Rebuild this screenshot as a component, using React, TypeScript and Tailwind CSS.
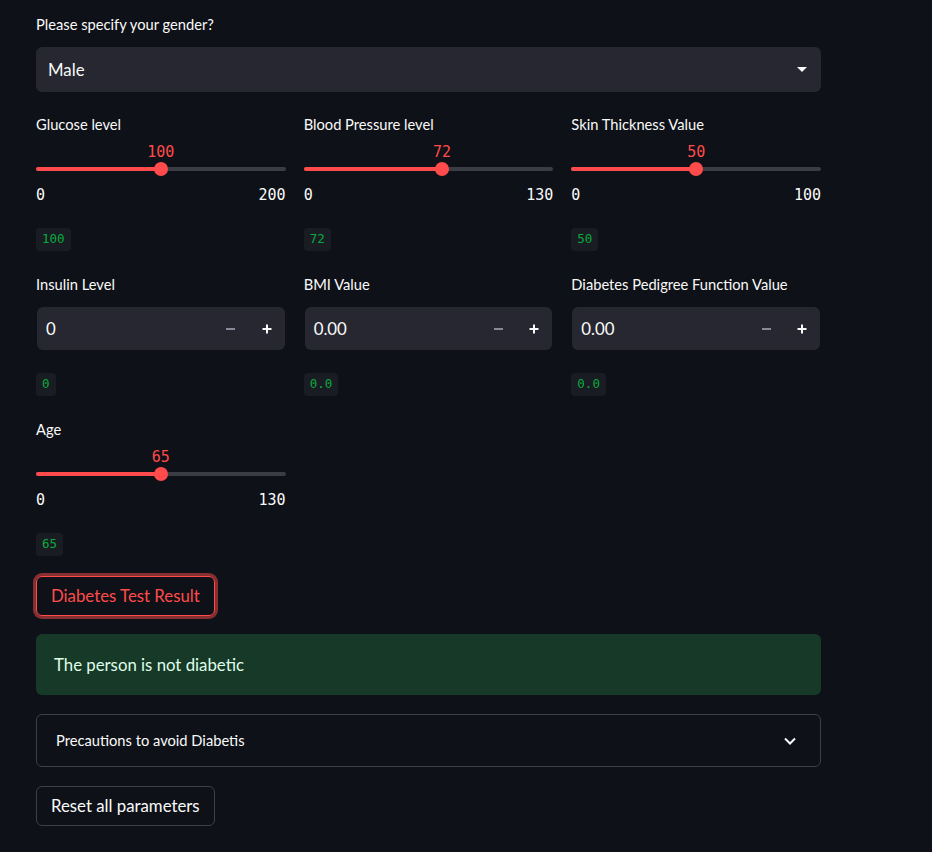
import React from "react";

const sans = "font-['Lato','Liberation_Sans',sans-serif]";
const mono = "font-['DejaVu_Sans_Mono','Liberation_Mono',monospace]";

function Badge({ value }: { value: string }) {
  return (
    <div className="flex">
      <span className={`${mono} h-[23px] px-[6px] flex items-center rounded-[4px] bg-[#1a1c23] text-[#09ab3b] text-[12.5px]`}>
        {value}
      </span>
    </div>
  );
}

function SliderField({ label, value, min, max }: { label: string; value: number; min: number; max: number }) {
  const pct = ((value - min) / (max - min)) * 100;
  return (
    <div className="flex flex-col">
      <div className="h-[20px] flex items-center text-[14.7px] text-[#fafafa]">{label}</div>
      <div className="relative h-[18px] mt-[9px]">
        <span
          className={`${mono} absolute top-0 -translate-x-1/2 text-[15px] leading-[18px] text-[#ff4b4b]`}
          style={{ left: `${pct}%` }}
        >
          {value}
        </span>
      </div>
      <div className="relative h-[14px] mt-[1px] flex items-center">
        <div className="w-full h-[4px] rounded-full bg-[#3b3d45]" />
        <div className="absolute left-0 h-[4px] rounded-full bg-[#ff4b4b]" style={{ width: `${pct}%` }} />
        <div
          className="absolute w-[14px] h-[14px] -ml-[7px] rounded-full bg-[#ff4b4b]"
          style={{ left: `${pct}%` }}
        />
      </div>
      <div className={`${mono} mt-[9px] h-[20px] flex items-center justify-between text-[15px] text-[#fafafa]`}>
        <span>{min}</span>
        <span>{max}</span>
      </div>
      <div className="mt-[23px]">
        <Badge value={String(value)} />
      </div>
    </div>
  );
}

function NumberField({ label, value, badge }: { label: string; value: string; badge: string }) {
  return (
    <div className="flex flex-col">
      <div className="h-[20px] flex items-center text-[14.7px] text-[#fafafa]">{label}</div>
      <div className="mt-[13px] h-[43px] mx-[1px] rounded-[6px] bg-[#262730] flex items-center">
        <span className="flex-1 pl-[9px] text-[16.8px] text-[#fafafa]">{value}</span>
        <div className="w-[36px] h-full flex items-center justify-center">
          <div className="w-[9px] h-[2px] bg-[#8b8799]" />
        </div>
        <div className="w-[36px] h-full flex items-center justify-center">
          <svg width="10" height="10" viewBox="0 0 10 10">
            <path d="M5 0.5v9M0.5 5h9" stroke="#fafafa" strokeWidth="2" />
          </svg>
        </div>
      </div>
      <div className="mt-[23px]">
        <Badge value={badge} />
      </div>
    </div>
  );
}

export default function App() {
  return (
    <div className={`${sans} min-h-[852px] bg-[#0e1117] text-[#fafafa]`}>
      <div className="w-[785px] ml-[36px] pt-[14px] pb-[26px] flex flex-col">
        <div className="h-[20px] flex items-center text-[14.7px]">Please specify your gender?</div>
        <div className="mt-[13px] h-[45px] rounded-[6px] bg-[#262730] flex items-center justify-between pl-[12px] pr-[14px]">
          <span className="text-[16.8px]">Male</span>
          <svg width="10" height="6" viewBox="0 0 10 6">
            <path d="M0 0h10L5 5z" fill="#fafafa" />
          </svg>
        </div>

        <div className="mt-[22px] grid grid-cols-3 gap-x-[18px] gap-y-[23px]">
          <SliderField label="Glucose level" value={100} min={0} max={200} />
          <SliderField label="Blood Pressure level" value={72} min={0} max={130} />
          <SliderField label="Skin Thickness Value" value={50} min={0} max={100} />
          <NumberField label="Insulin Level" value="0" badge="0" />
          <NumberField label="BMI Value" value="0.00" badge="0.0" />
          <NumberField label="Diabetes Pedigree Function Value" value="0.00" badge="0.0" />
          <SliderField label="Age" value={65} min={0} max={130} />
        </div>

        <div className="mt-[20px] flex">
          <button className="h-[40px] px-[14px] rounded-[6px] border border-[#ff4b4b] shadow-[0_0_0_3px_rgba(255,75,75,0.5)] text-[16.8px] text-[#ff4b4b]">
            Diabetes Test Result
          </button>
        </div>

        <div className="mt-[18px] h-[61px] rounded-[6px] bg-[#173928] flex items-center px-[18px] text-[16.8px] text-[#dffde9]">
          The person is not diabetic
        </div>

        <div className="mt-[19px] h-[53px] rounded-[6px] border border-[#3d4044] flex items-center justify-between pl-[19px] pr-[24px]">
          <span className="text-[14.7px]">Precautions to avoid Diabetis</span>
          <svg width="12" height="8" viewBox="0 0 12 8">
            <path d="M1 1.5l5 5 5-5" stroke="#fafafa" strokeWidth="2" fill="none" />
          </svg>
        </div>

        <div className="mt-[19px] flex">
          <button className="h-[40px] px-[14px] rounded-[6px] border border-[#3d4044] text-[16.8px] text-[#fafafa]">
            Reset all parameters
          </button>
        </div>
      </div>
    </div>
  );
}
